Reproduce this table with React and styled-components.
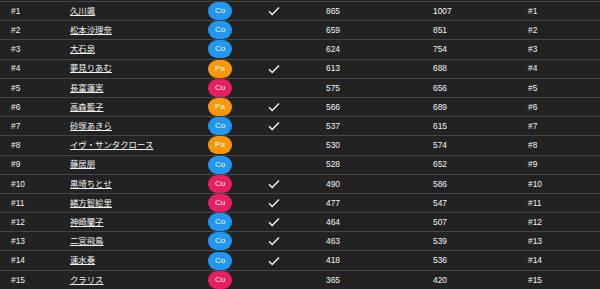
import React from 'react';
import styled, { createGlobalStyle } from 'styled-components';

const GlobalStyle = createGlobalStyle`
  html, body {
    margin: 0;
    padding: 0;
    background: #222222;
  }
  body {
    font-family: "Liberation Sans", "Noto Sans CJK JP", Arial, sans-serif;
    color: #fff;
  }
`;

const Table = styled.div`
  padding-top: 1px;
  background: #222222;
`;

const Row = styled.div`
  display: grid;
  grid-template-columns: 59px 138px 58px 60px 107px 95px 1fr;
  align-items: center;
  height: 18.2px;
  padding-left: 11px;
  border-top: 1px solid #464646;
  font-size: 8.4px;
  line-height: 1;
`;

const Cell = styled.div`
  white-space: nowrap;
  color: #f4f4f4;
`;

const NameLink = styled.a`
  color: #f4f4f4;
  text-decoration: underline;
  text-underline-offset: 1px;
`;

const badgeColors = {
  Co: '#2196f3',
  Pa: '#ff9800',
  Cu: '#e91e63',
};

const Badge = styled.span`
  display: inline-flex;
  align-items: center;
  justify-content: center;
  width: 24px;
  height: 18px;
  border-radius: 10px;
  background: ${(p) => badgeColors[p.$type]};
  color: #fff;
  font-size: 8px;
`;

const CheckCell = styled.div`
  display: flex;
  align-items: center;
  padding-left: 2px;
`;

const CheckMark = () => (
  <svg width="12" height="10" viewBox="0 0 12 10">
    <polyline points="1,5.2 4.2,8.4 11,1.4" fill="none" stroke="#f4f4f4" strokeWidth="1.4" />
  </svg>
);

const idols = [
  ['久川颯', 'Co', true, 865, 1007],
  ['松本沙理奈', 'Co', false, 659, 851],
  ['大石泉', 'Co', false, 624, 754],
  ['夢見りあむ', 'Pa', true, 613, 688],
  ['長富蓮実', 'Cu', false, 575, 656],
  ['高森藍子', 'Pa', true, 566, 689],
  ['砂塚あきら', 'Co', true, 537, 615],
  ['イヴ・サンタクロース', 'Pa', false, 530, 574],
  ['藤居朋', 'Co', false, 528, 652],
  ['黒埼ちとせ', 'Cu', true, 490, 586],
  ['緒方智絵里', 'Cu', true, 477, 547],
  ['神崎蘭子', 'Co', true, 464, 507],
  ['二宮飛鳥', 'Co', true, 463, 539],
  ['速水奏', 'Co', true, 418, 536],
  ['クラリス', 'Cu', false, 365, 420],
];

const App = () => (
  <>
    <GlobalStyle />
    <Table>
      {idols.map(([name, type, voted, score, total], i) => (
        <Row key={name}>
          <Cell>#{i + 1}</Cell>
          <Cell>
            <NameLink href="#">{name}</NameLink>
          </Cell>
          <Cell>
            <Badge $type={type}>{type}</Badge>
          </Cell>
          <CheckCell>{voted && <CheckMark />}</CheckCell>
          <Cell>{score}</Cell>
          <Cell>{total}</Cell>
          <Cell>#{i + 1}</Cell>
        </Row>
      ))}
    </Table>
  </>
);

export default App;
